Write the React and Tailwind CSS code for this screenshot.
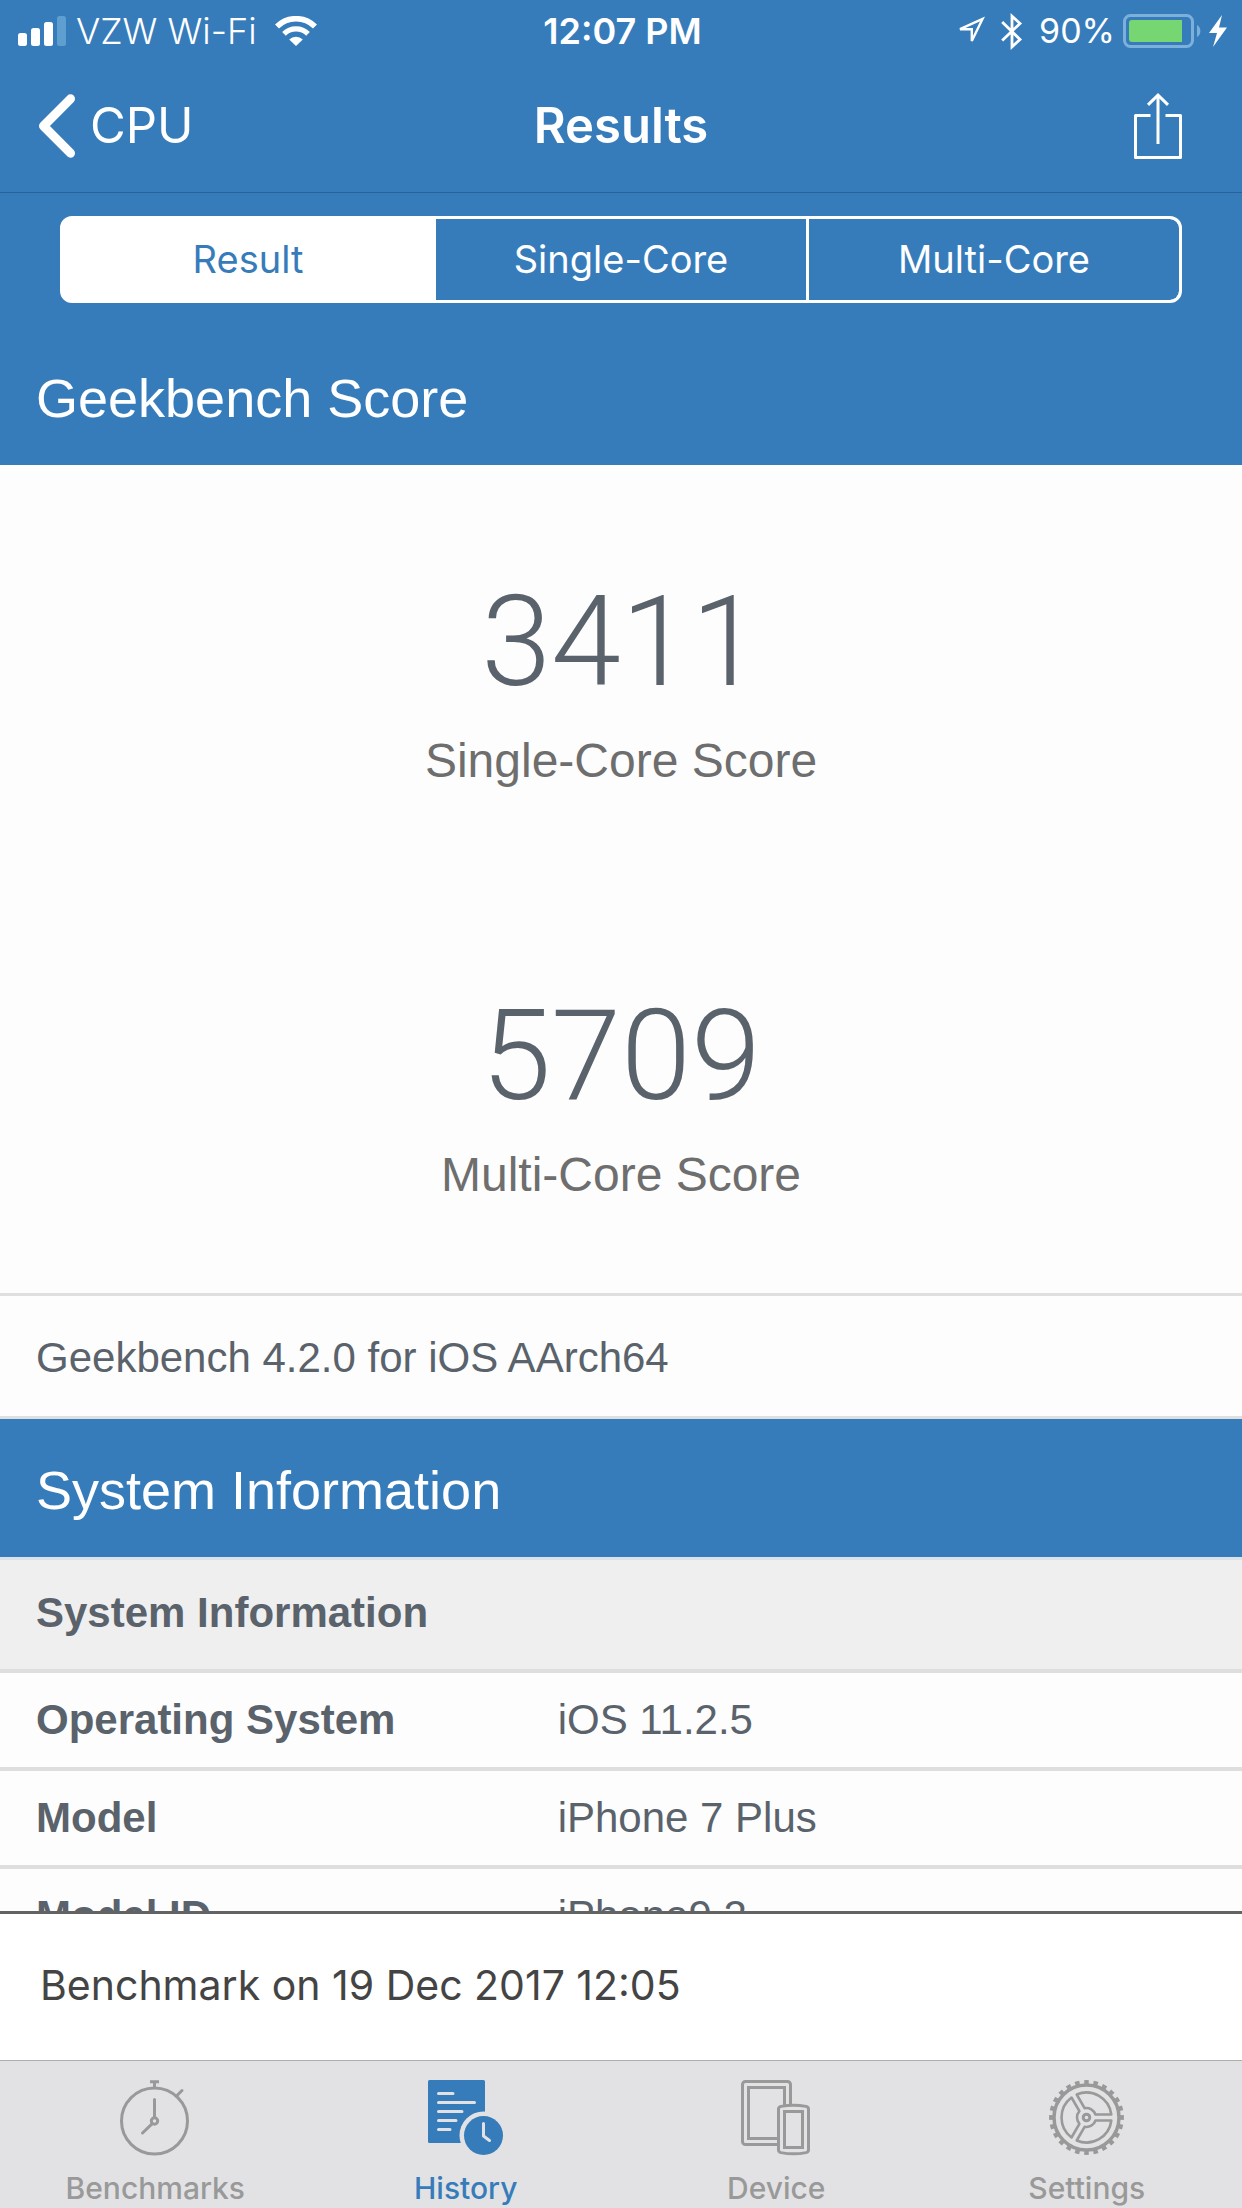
import React, { useState } from "react"

const SEGMENTS = ["Result", "Single-Core", "Multi-Core"]

const SCORES = [
    { value: "3411", label: "Single-Core Score" },
    { value: "5709", label: "Multi-Core Score" },
]

const SYSTEM_ROWS = [
    ["Operating System", "iOS 11.2.5"],
    ["Model", "iPhone 7 Plus"],
    ["Model ID", "iPhone9,2"],
]

function SignalIcon() {
    return (
        <svg width="48" height="30" viewBox="0 0 48 30" fill="currentColor" aria-hidden="true">
            <rect x="0" y="17" width="9" height="13" rx="2.5" />
            <rect x="13" y="12" width="9" height="18" rx="2.5" />
            <rect x="26" y="6" width="9" height="24" rx="2.5" />
            <rect x="39" y="0" width="9" height="30" rx="2.5" fill="#5e9fd0" />
        </svg>
    )
}

function WifiIcon() {
    return (
        <svg width="42" height="30" viewBox="0 0 42 30" fill="none" aria-hidden="true">
            <path d="M2 10.5A27 27 0 0 1 40 10.5" stroke="currentColor" strokeWidth="5.6" />
            <path d="M9 17.8A17 17 0 0 1 33 17.8" stroke="currentColor" strokeWidth="5.2" />
            <path d="M14.2 23.4A10 10 0 0 1 27.8 23.4L21 30Z" fill="currentColor" />
        </svg>
    )
}

function LocationIcon() {
    return (
        <svg width="30" height="30" viewBox="0 0 30 30" fill="none" aria-hidden="true">
            <path d="M5 13.2L27.5 3L16.8 25V13.2Z" stroke="currentColor" strokeWidth="2.4" />
        </svg>
    )
}

function BluetoothIcon() {
    return (
        <svg width="22" height="37" viewBox="0 0 22 37" fill="none" aria-hidden="true">
            <path d="M1.2 9L19 26.5L11 33.8V3.2L19 10.5L1.2 27.5" stroke="currentColor" strokeWidth="2.8" />
        </svg>
    )
}

function BatteryIcon() {
    return (
        <svg width="78" height="34" viewBox="0 0 78 34" fill="none" aria-hidden="true">
            <rect x="1.5" y="1.5" width="68" height="31" rx="6" stroke="#7cb0da" strokeWidth="3" />
            <path d="M74 11A7 7 0 0 1 74 23Z" fill="#7cb0da" />
            <path d="M9 6H59V28H9A3 3 0 0 1 6 25V9A3 3 0 0 1 9 6Z" fill="#76d672" />
        </svg>
    )
}

function BoltIcon() {
    return (
        <svg width="18" height="32" viewBox="0 0 18 32" fill="currentColor" aria-hidden="true">
            <path d="M13 0L0 18H8L4 32L18 12.5H10Z" />
        </svg>
    )
}

function BackIcon() {
    return (
        <svg width="38" height="64" viewBox="0 0 38 64" fill="none" aria-hidden="true">
            <path
                d="M32.5 4.8L5.5 32L32.5 59.2"
                stroke="currentColor"
                strokeWidth="9"
                strokeLinecap="round"
                strokeLinejoin="round"
            />
        </svg>
    )
}

function ShareIcon() {
    return (
        <svg width="48" height="66" viewBox="0 0 48 66" fill="none" stroke="currentColor" strokeWidth="3" aria-hidden="true">
            <path d="M16.5 22.5H1.5V64.5H46.5V22.5H31.5" strokeLinejoin="round" />
            <path d="M24 51V2.5" />
            <path d="M14 11.8L24 2.2L34 11.8" />
        </svg>
    )
}

function StopwatchIcon() {
    return (
        <svg width="76" height="76" viewBox="0 0 76 76" fill="none" stroke="currentColor" strokeWidth="3" aria-hidden="true">
            <circle cx="37.5" cy="41" r="33" />
            <path d="M33 1.8H42M37.5 1.8V8" />
            <path d="M59.5 16L65 10.5M37.5 19.5V37M35 43.8L25.5 53" strokeLinecap="round" />
            <circle cx="37.5" cy="41" r="3.2" />
        </svg>
    )
}

function HistoryIcon() {
    return (
        <svg width="76" height="76" viewBox="0 0 76 76" fill="none" aria-hidden="true">
            <rect x="0" y="0" width="57" height="63" rx="1.5" fill="currentColor" />
            <path
                d="M10.5 13.5H25M10.5 22.5H46.5M10.5 31.5H34M10.5 40.5H28M10.5 49.5H22"
                stroke="#e2e2e4"
                strokeWidth="3"
                strokeLinecap="round"
            />
            <circle cx="55.5" cy="55.5" r="24" fill="#e2e2e4" />
            <circle cx="55.5" cy="55.5" r="19.5" fill="currentColor" />
            <path
                d="M55.5 43.5V56L61.5 60.5"
                stroke="#e2e2e4"
                strokeWidth="3"
                strokeLinecap="round"
                strokeLinejoin="round"
            />
        </svg>
    )
}

function DeviceIcon() {
    return (
        <svg width="76" height="76" viewBox="0 0 76 76" fill="none" stroke="currentColor" strokeWidth="3" aria-hidden="true">
            <rect x="4.5" y="1.5" width="48" height="63" rx="3" />
            <rect x="10.5" y="7.5" width="36" height="51" />
            <path
                d="M43 26.4Q55.5 24 68 26.4Q70.5 27 70.5 29V70Q70.5 72 68 72.6Q55.5 75 43 72.6Q40.5 72 40.5 70V29Q40.5 27 43 26.4Z"
                fill="#e2e2e4"
            />
            <rect x="46.5" y="31.5" width="18" height="36" />
        </svg>
    )
}

function GearIcon() {
    return (
        <svg width="76" height="76" viewBox="0 0 76 76" fill="none" stroke="currentColor" aria-hidden="true">
            <circle cx="37.5" cy="37.5" r="32.5" strokeWidth="3.5" />
            <circle cx="37.5" cy="37.5" r="35.4" strokeWidth="4" pathLength="240" strokeDasharray="5 5" strokeDashoffset="2.5" />
            <circle cx="37.5" cy="37.5" r="3.3" strokeWidth="3" />
            {[0, 120, 240].map((angle) => (
                <path
                    key={angle}
                    d="M9 3L24.8 3A25 25 0 0 1 -9.8 22.98L-1.9 9.29A9.5 9.5 0 0 0 9 3Z"
                    transform={`translate(37.5 37.5) rotate(${angle})`}
                    strokeWidth="2.6"
                    strokeLinejoin="round"
                />
            ))}
        </svg>
    )
}

const TABS = [
    { label: "Benchmarks", Icon: StopwatchIcon },
    { label: "History", Icon: HistoryIcon },
    { label: "Device", Icon: DeviceIcon },
    { label: "Settings", Icon: GearIcon },
]

function StatusBar() {
    return (
        <div className="grid h-15 grid-cols-[1fr_auto_1fr] items-center pt-0.5 pl-[18px] pr-[15px] text-[36px] leading-[58px]">
            <div className="flex items-center gap-[10px] font-light">
                <SignalIcon />
                <span>VZW Wi-Fi</span>
                <span className="pl-2"><WifiIcon /></span>
            </div>
            <span className="font-semibold">12:07 PM</span>
            <div className="flex items-center justify-end gap-2">
                <LocationIcon />
                <span className="px-2"><BluetoothIcon /></span>
                <span className="text-[34px]">90%</span>
                <BatteryIcon />
                <BoltIcon />
            </div>
        </div>
    )
}

function SectionTitle({ children }) {
    return (
        <h2 className="bg-[#377cba] px-9 pt-9 pb-8 text-[54px] leading-[70px] text-white">
            {children}
        </h2>
    )
}

function App() {

    const [segment, setSegment] = useState("Result")
    const [tab, setTab] = useState("History")

    return (
        <div className="flex h-screen flex-col overflow-hidden bg-white font-['Inter',sans-serif]">
            <header className="shrink-0 bg-[#377cba] text-white">
                <StatusBar />
                <div className="grid grid-cols-[1fr_auto_1fr] items-center border-b border-[#28619a] px-[38px] text-[49px] leading-[132px]">
                    <button className="flex items-center gap-[14px] justify-self-start">
                        <BackIcon />
                        CPU
                    </button>
                    <h1 className="font-semibold">Results</h1>
                    <button aria-label="Share" className="justify-self-end pr-[22px]">
                        <ShareIcon />
                    </button>
                </div>
                <div className="px-15 pt-[23px] pb-6">
                    <div className="grid grid-cols-3 gap-[3px] overflow-hidden rounded-xl border-3 border-white bg-white">
                        {SEGMENTS.map((name) => (
                            <button
                                key={name}
                                onClick={() => setSegment(name)}
                                aria-pressed={segment === name}
                                className={`text-[38px] leading-[81px] ${
                                    segment === name ? "bg-white text-[#377cba]" : "bg-[#377cba] text-white"
                                } last:rounded-r-[9px]`}
                            >
                                {name}
                            </button>
                        ))}
                    </div>
                </div>
            </header>

            <main className="min-h-0 flex-1 overflow-y-auto bg-[#fdfdfd] font-['Liberation_Sans',sans-serif] text-[#5a626b] [scrollbar-width:none]">
                <SectionTitle>Geekbench Score</SectionTitle>
                {SCORES.map((score) => (
                    <div key={score.label} className="pt-28 pb-[84px] text-center">
                        <p className="font-['Roboto',sans-serif] text-[126px] leading-[130px] font-light">{score.value}</p>
                        <p className="mt-5 text-[48px] leading-[68px] text-[#6e6e6e]">{score.label}</p>
                    </div>
                ))}
                <p className="border-y-3 border-[#dfdfdf] px-9 pt-[34px] pb-[30px] text-[42px] leading-[56px]">
                    Geekbench 4.2.0 for iOS AArch64
                </p>
                <SectionTitle>System Information</SectionTitle>
                <table className="w-full table-fixed border-separate border-spacing-0 text-left text-[42px]">
                    <colgroup>
                        <col className="w-[42%]" />
                        <col />
                    </colgroup>
                    <thead>
                        <tr>
                            <th
                                colSpan={2}
                                className="border-t-3 border-b-4 border-t-[#dbe2e9] border-b-[#dedede] bg-[#efefef] px-9 pt-5 pb-6 leading-[65px]"
                            >
                                System Information
                            </th>
                        </tr>
                    </thead>
                    <tbody>
                        {SYSTEM_ROWS.map(([name, value]) => (
                            <tr key={name}>
                                <th scope="row" className="border-b-4 border-[#dedede] py-5 pl-9 leading-[54px]">{name}</th>
                                <td className="border-b-4 border-[#dedede] py-5 pl-9 leading-[54px]">{value}</td>
                            </tr>
                        ))}
                    </tbody>
                </table>
            </main>

            <p className="shrink-0 border-t-3 border-[#636363] bg-white px-10 pt-10 pb-[44px] text-[41px] leading-[62px] text-[#444444]">
                Benchmark on 19 Dec 2017 12:05
            </p>

            <nav className="grid shrink-0 grid-cols-4 border-t border-[#adadaf] bg-[#e2e2e4]">
                {TABS.map(({ label, Icon }) => (
                    <button
                        key={label}
                        onClick={() => setTab(label)}
                        aria-current={tab === label ? "page" : undefined}
                        className={`flex flex-col items-center gap-[14px] pt-[19px] pb-[2px] text-[30px] leading-[36px] font-medium ${
                            tab === label ? "text-[#377cba]" : "text-[#999999]"
                        }`}
                    >
                        <Icon />
                        {label}
                    </button>
                ))}
            </nav>
        </div>
    )

}

export default App
